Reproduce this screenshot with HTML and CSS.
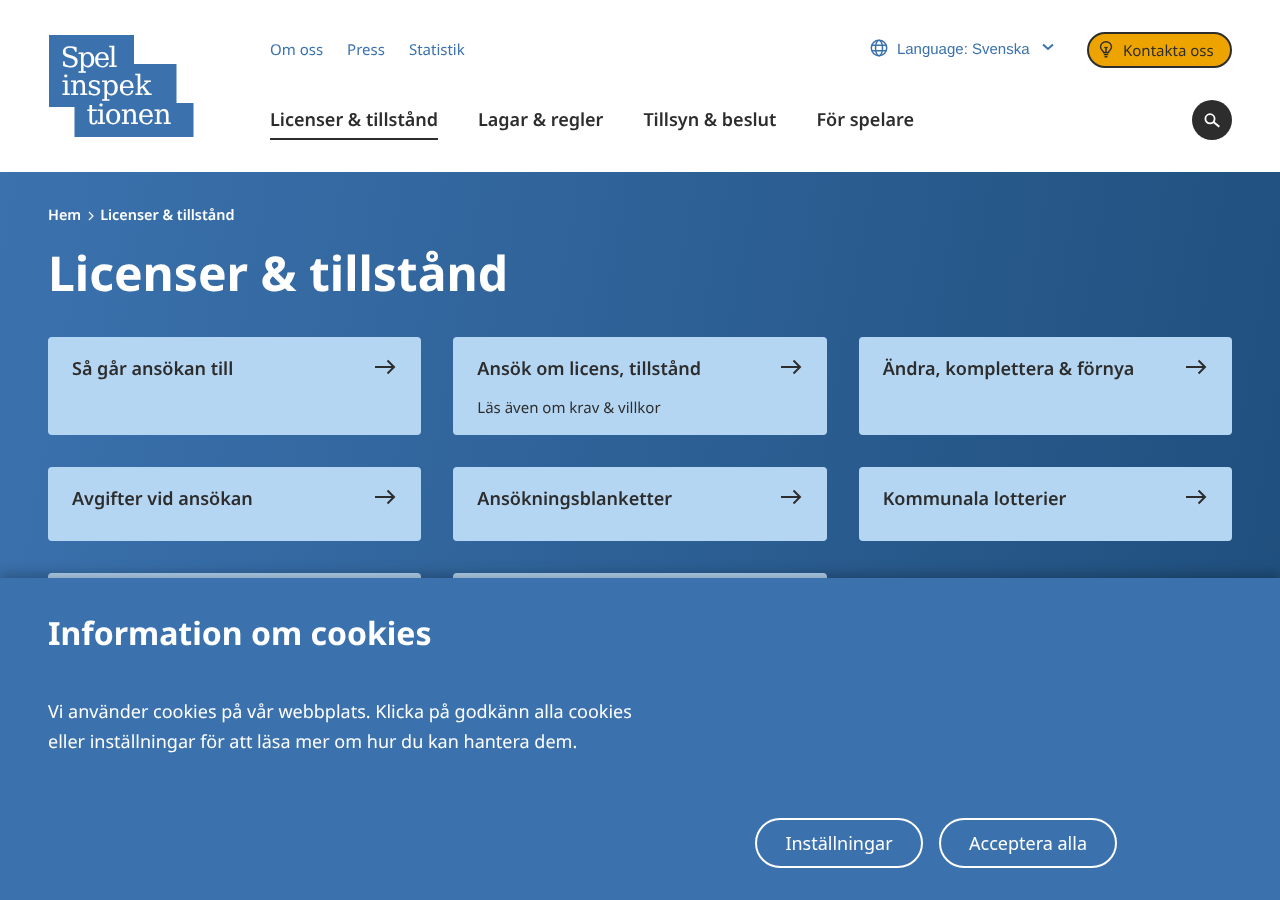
FILE: index.html
```html
<!DOCTYPE html>
<html lang="sv">
<head>
  <meta charset="UTF-8">
  <meta name="viewport" content="width=device-width, initial-scale=1.0">
  <title>Licenser &amp; tillstånd</title>
  <link rel="stylesheet" href="styles.css">
</head>
<body>
  <header class="site-header">
    <a class="logo" href="#">
      <svg width="146" height="104" viewBox="0 0 146 104">
        <path d="M1 1H86V30H128.500V69H145.500V103H26.500V73H1Z" fill="#3b72ae"/>
        <text class="logo-text" x="12.500" y="33" textLength="57" lengthAdjust="spacing">Spel</text>
        <text class="logo-text" x="13.500" y="61" textLength="90" lengthAdjust="spacing">inspek</text>
        <text class="logo-text" x="38.500" y="90" textLength="85" lengthAdjust="spacing">tionen</text>
      </svg>
    </a>
    <div class="header-main">
      <div class="top-row">
        <nav class="top-links">
          <a href="#">Om oss</a>
          <a href="#">Press</a>
          <a href="#">Statistik</a>
        </nav>
        <div class="top-actions">
          <a class="language" href="#">
            <svg width="18" height="18" viewBox="0 0 18 18" fill="none" stroke="#3b72ae" stroke-width="1.500">
              <circle cx="9" cy="9" r="7.700"/>
              <ellipse cx="9" cy="9" rx="3.500" ry="7.700"/>
              <path d="M1.800 6.300H16.200M1.800 11.700H16.200"/>
            </svg>
            <span>Language: Svenska</span>
            <svg class="chevron" width="12" height="8" viewBox="0 0 12 8" fill="none" stroke="#3b72ae" stroke-width="2">
              <path d="M1 1.500L6 6L11 1.500"/>
            </svg>
          </a>
          <a class="contact" href="#">
            <svg class="bulb" width="14" height="17" viewBox="0 0 14 17" fill="none" stroke="#2d2d2d" stroke-width="1.400">
              <path d="M4.500 11.500C4.500 9.800 1.500 9 1.500 6a5.500 5.300 0 0 1 11 0C12.500 9 9.500 9.800 9.500 11.500Z"/>
              <path d="M4.800 13.500H9.200M5.500 15.700H8.500M7 11V7M5.500 6L7 7.300L8.500 6"/>
            </svg>
            Kontakta oss
          </a>
        </div>
      </div>
      <div class="main-row">
        <nav class="main-nav">
          <a class="active" href="#">Licenser &amp; tillstånd</a>
          <a href="#">Lagar &amp; regler</a>
          <a href="#">Tillsyn &amp; beslut</a>
          <a href="#">För spelare</a>
        </nav>
        <button class="search" aria-label="Sök">
          <svg width="18" height="18" viewBox="0 0 18 18" fill="none" stroke="#fff">
            <circle cx="7" cy="7.800" r="4.600" stroke-width="1.800"/>
            <path d="M10.500 11L16.300 15.700" stroke-width="2"/>
          </svg>
        </button>
      </div>
    </div>
  </header>

  <main class="hero">
    <div class="breadcrumb">
      <a href="#">Hem</a>
      <svg width="8" height="10" viewBox="0 0 8 10" fill="none" stroke="#fff" stroke-width="1.200">
        <path d="M2 1L6 5L2 9"/>
      </svg>
      <span>Licenser &amp; tillstånd</span>
    </div>
    <h1>Licenser &amp; tillstånd</h1>
    <div class="cards">
      <a class="card" href="#">
        <div class="card-head"><h2>Så går ansökan till</h2><svg class="arrow" width="22" height="16" viewBox="0 0 22 16" fill="none" stroke="#2d2d2d" stroke-width="2"><path d="M1 8H20M13.500 1.500L20 8L13.500 14.500"/></svg></div>
      </a>
      <a class="card" href="#">
        <div class="card-head"><h2>Ansök om licens, tillstånd</h2><svg class="arrow" width="22" height="16" viewBox="0 0 22 16" fill="none" stroke="#2d2d2d" stroke-width="2"><path d="M1 8H20M13.500 1.500L20 8L13.500 14.500"/></svg></div>
        <p>Läs även om krav &amp; villkor</p>
      </a>
      <a class="card" href="#">
        <div class="card-head"><h2>Ändra, komplettera &amp; förnya</h2><svg class="arrow" width="22" height="16" viewBox="0 0 22 16" fill="none" stroke="#2d2d2d" stroke-width="2"><path d="M1 8H20M13.500 1.500L20 8L13.500 14.500"/></svg></div>
      </a>
      <a class="card" href="#">
        <div class="card-head"><h2>Avgifter vid ansökan</h2><svg class="arrow" width="22" height="16" viewBox="0 0 22 16" fill="none" stroke="#2d2d2d" stroke-width="2"><path d="M1 8H20M13.500 1.500L20 8L13.500 14.500"/></svg></div>
      </a>
      <a class="card" href="#">
        <div class="card-head"><h2>Ansökningsblanketter</h2><svg class="arrow" width="22" height="16" viewBox="0 0 22 16" fill="none" stroke="#2d2d2d" stroke-width="2"><path d="M1 8H20M13.500 1.500L20 8L13.500 14.500"/></svg></div>
      </a>
      <a class="card" href="#">
        <div class="card-head"><h2>Kommunala lotterier</h2><svg class="arrow" width="22" height="16" viewBox="0 0 22 16" fill="none" stroke="#2d2d2d" stroke-width="2"><path d="M1 8H20M13.500 1.500L20 8L13.500 14.500"/></svg></div>
      </a>
      <a class="card card-hidden" href="#"></a>
      <a class="card card-hidden" href="#"></a>
    </div>
  </main>

  <aside class="cookies">
    <h2>Information om cookies</h2>
    <p>Vi använder cookies på vår webbplats. Klicka på godkänn alla cookies eller inställningar för att läsa mer om hur du kan hantera dem.</p>
    <div class="cookie-buttons">
      <button class="settings">Inställningar</button>
      <button class="accept">Acceptera alla</button>
    </div>
  </aside>
</body>
</html>
```

FILE: styles.css
```css
* {
  box-sizing: border-box;
}
html, body {
  height: 100%;
}
body {
  margin: 0;
  font-family: "Noto Sans", sans-serif;
  color: #2d2d2d;
  overflow: hidden;
  text-rendering: geometricPrecision;
  will-change: transform;
}
a {
  color: inherit;
  text-decoration: none;
}

.site-header {
  height: 172px;
  padding: 0 48px;
  display: flex;
  background: #fff;
}
.logo {
  width: 222px;
  flex: none;
  padding-top: 34px;
}
.logo svg {
  display: block;
}
.logo-text {
  font-family: "DejaVu Serif", serif;
  font-weight: 400;
  fill: #fff;
  font-size: 28px;
}
.header-main {
  flex: 1;
  display: flex;
  flex-direction: column;
}
.top-row {
  height: 100px;
  display: flex;
  justify-content: space-between;
  align-items: flex-start;
}
.top-links {
  display: flex;
  gap: 24px;
  padding-top: 40px;
  font-size: 15px;
  line-height: 20px;
  color: #3b72ae;
}
.top-actions {
  display: flex;
  align-items: flex-start;
  padding-top: 32px;
}
.language {
  display: flex;
  align-items: center;
  margin-top: 6px;
  height: 20px;
  font-family: "Liberation Sans", sans-serif;
  font-size: 15px;
  color: #3b72ae;
}
.language span {
  margin: 2px 0 0 9px;
}
.chevron {
  margin-left: 12px;
  margin-top: -3px;
}
.contact {
  margin-left: 33.500px;
  width: 145px;
  height: 36px;
  border: 2px solid #2d2d2d;
  border-radius: 18px;
  background: #eea400;
  display: flex;
  align-items: center;
  gap: 10px;
  padding: 2px 0 0 10px;
  font-size: 15px;
}
.bulb {
  margin-top: -4px;
}
.main-row {
  display: flex;
  justify-content: space-between;
  align-items: flex-start;
}
.main-nav {
  display: flex;
  gap: 40px;
}
.main-nav a {
  height: 40px;
  line-height: 40px;
  font-size: 18px;
  font-weight: 600;
  border-bottom: 2px solid transparent;
}
.main-nav a.active {
  border-bottom-color: #2d2d2d;
}
.search {
  width: 40px;
  height: 40px;
  padding: 0;
  border: 0;
  border-radius: 50%;
  background: #2d2d2d;
  display: flex;
  align-items: center;
  justify-content: center;
}

.hero {
  height: 728px;
  padding: 34px 48px 0;
  background: linear-gradient(100deg, #3b72ae 0%, #1f4e7c 100%);
  color: #fff;
}
.breadcrumb {
  display: flex;
  align-items: center;
  gap: 5.500px;
  font-size: 14.400px;
  line-height: 20px;
  font-weight: 600;
}
h1 {
  margin: 15px 0 0;
  font-size: 48px;
  line-height: 66px;
  font-weight: 700;
}
.cards {
  margin-top: 30px;
  display: grid;
  grid-template-columns: repeat(3, 1fr);
  gap: 32px;
}
.card {
  display: block;
  padding: 16px 24px;
  min-height: 74px;
  border-radius: 4px;
  background: #b5d6f2;
  color: #2d2d2d;
}
.card-head {
  display: flex;
  justify-content: space-between;
  align-items: flex-start;
}
.card h2 {
  margin: 0;
  font-size: 18px;
  line-height: 32px;
  font-weight: 600;
}
.arrow {
  margin: 6px 1px 0 0;
  flex: none;
}
.card p {
  margin: 12px 0 0;
  font-size: 15px;
  line-height: 22px;
}
.card-hidden {
  height: 74px;
}

.cookies {
  position: fixed;
  left: 0;
  right: 0;
  bottom: 0;
  height: 322px;
  padding: 32px 48px 0;
  background: #3b72ae;
  color: #fff;
  box-shadow: 0 -4px 12px rgba(0, 0, 0, 0.25);
}
.cookies h2 {
  margin: 0;
  font-size: 32px;
  line-height: 48px;
  font-weight: 700;
}
.cookies p {
  margin: 39px 0 0;
  width: 600px;
  font-size: 18px;
  line-height: 30px;
}
.cookie-buttons {
  display: flex;
  gap: 16px;
  margin: 61px 0 0 707px;
}
.cookie-buttons button {
  height: 50px;
  border: 2px solid #fff;
  border-radius: 25px;
  background: transparent;
  color: #fff;
  font-family: inherit;
  font-size: 18px;
  padding: 0;
}
.settings {
  width: 168px;
}
.accept {
  width: 178px;
}
```
